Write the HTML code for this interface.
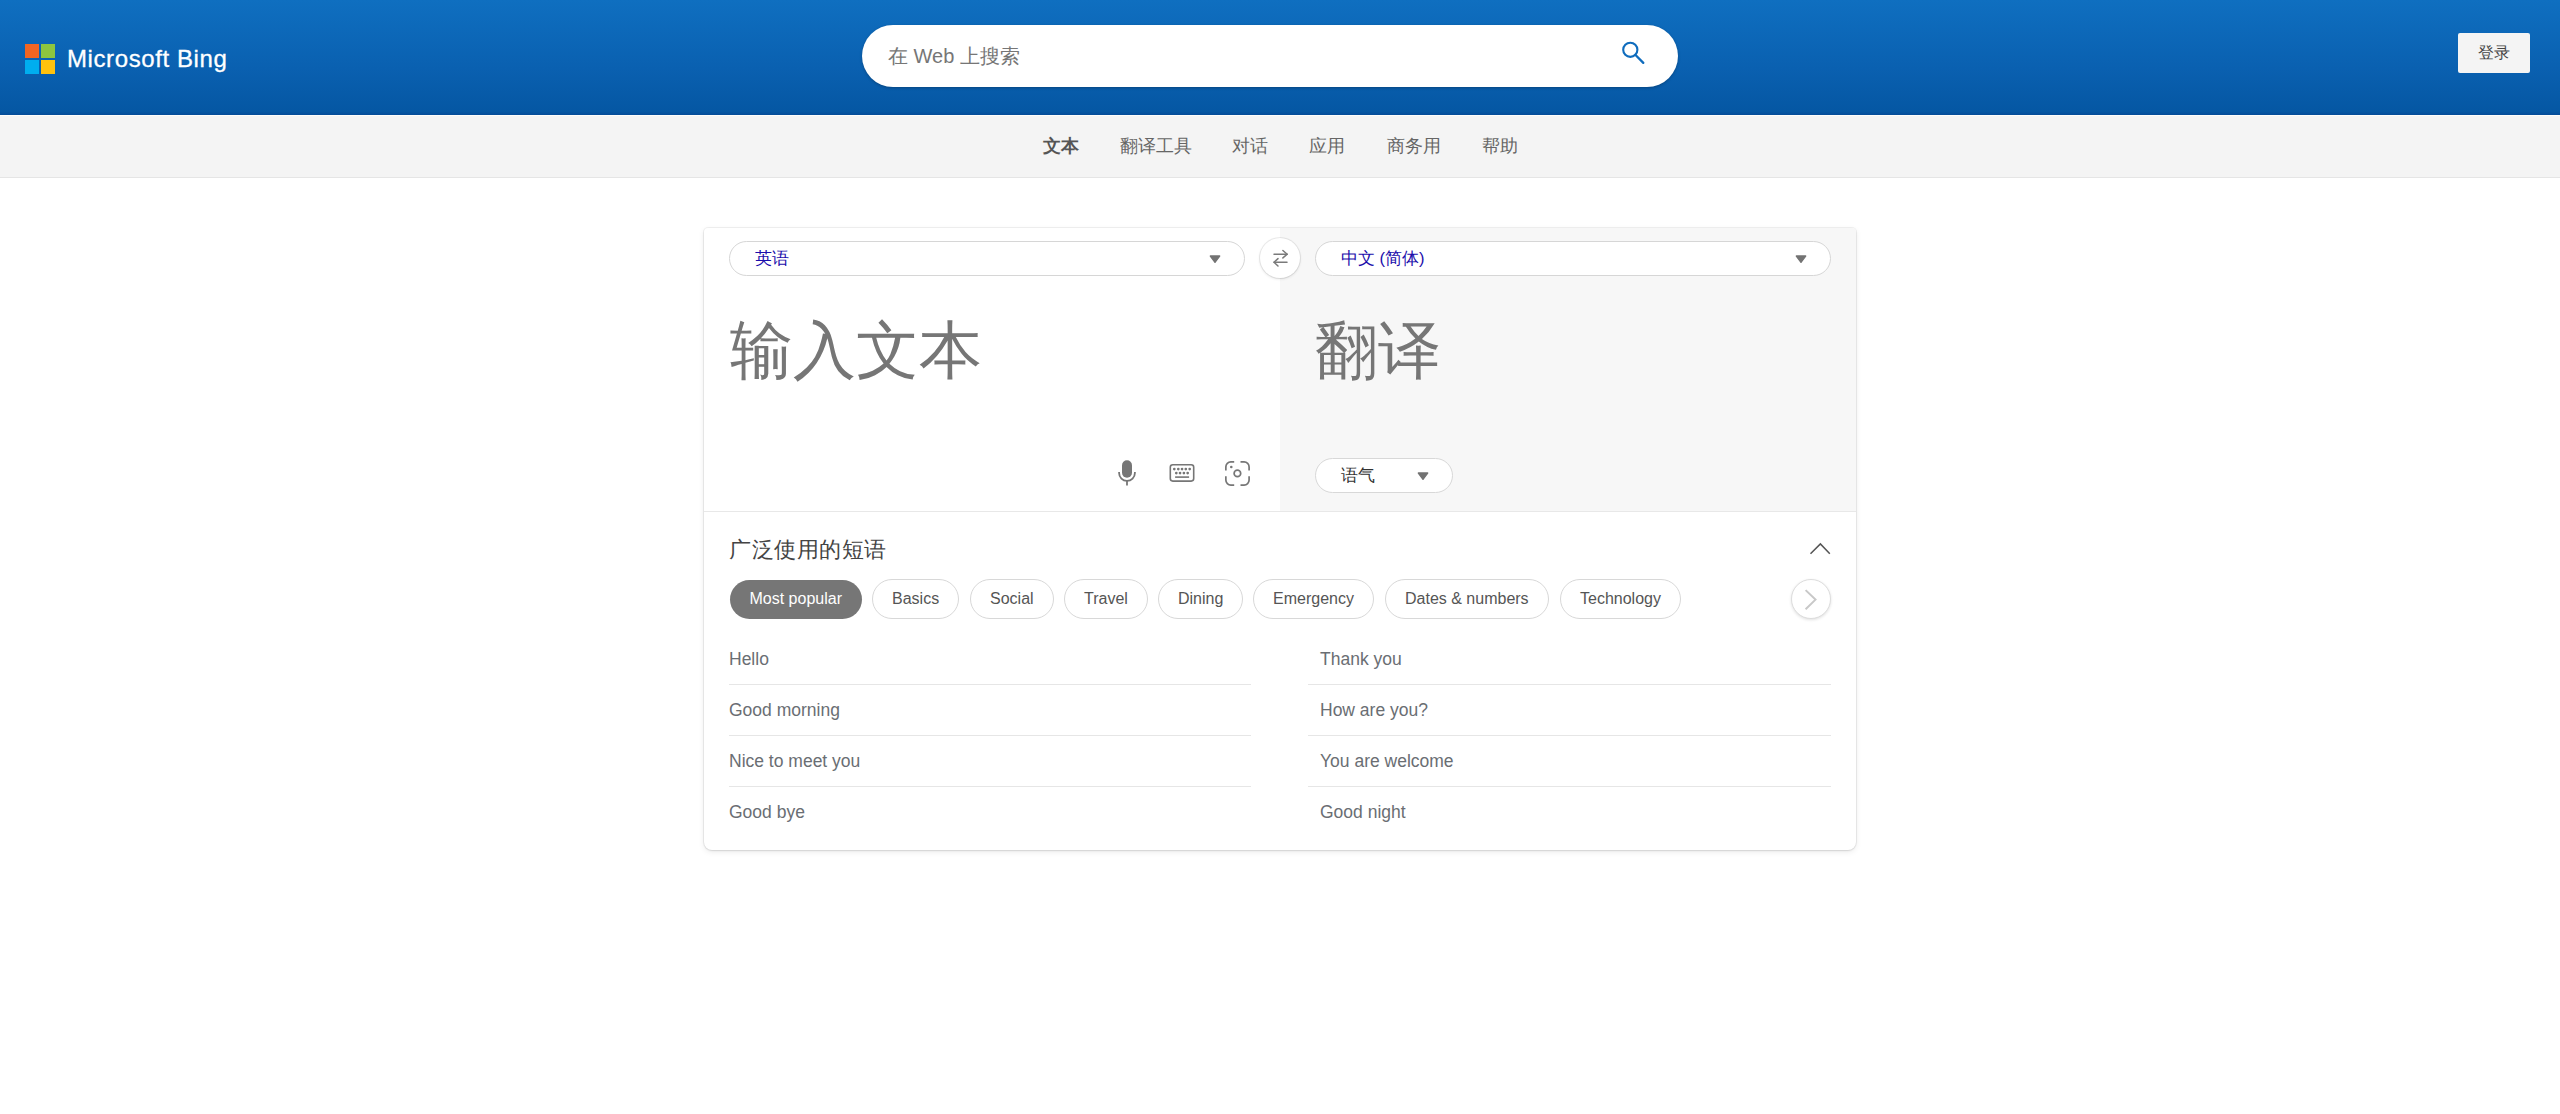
<!DOCTYPE html>
<html><head><meta charset="utf-8">
<style>
*{box-sizing:border-box;margin:0;padding:0}
html,body{width:2560px;height:1114px;overflow:hidden;background:#fff;font-family:"Liberation Sans",sans-serif}
.hdr{position:absolute;left:0;top:0;width:2560px;height:115px;background:linear-gradient(180deg,#0f6fc0 0%,#0a60b0 60%,#0557a3 97%,#054c98 100%)}
.hline{position:absolute;left:0;top:115px;width:2560px;height:1px;background:#fdfdfb}
.logo{position:absolute;left:25px;top:44px;width:30px;height:30px}
.logo i{position:absolute;width:14px;height:14px}
.brand{position:absolute;left:67px;top:44px;color:#fff;font-size:24px;line-height:30px;white-space:nowrap;letter-spacing:0.6px;-webkit-text-stroke:0.3px #fff}
.search{position:absolute;left:862px;top:25px;width:816px;height:62px;border-radius:31px;background:#fff;box-shadow:0 1px 3px rgba(0,0,0,.25)}
.search .ph{position:absolute;left:26px;top:0;line-height:62px;font-size:20px;color:#767676}
.login{position:absolute;left:2458px;top:33px;width:72px;height:40px;background:#f4f4f4;border-radius:2px;color:#444;font-size:16px;line-height:40px;text-align:center}
.nav{position:absolute;left:0;top:116px;width:2560px;height:62px;background:#f4f4f4;border-bottom:1px solid #e5e5e5}
.nav span{position:absolute;top:0;line-height:60px;font-size:18px;color:#666;white-space:nowrap}
.card{position:absolute;left:704px;top:228px;width:1152px;height:622px;background:#fff;border-radius:4px 4px 8px 8px;box-shadow:0 0 0 1px rgba(0,0,0,.05),0 1px 2px rgba(0,0,0,.08),0 2px 6px rgba(0,0,0,.08)}
.rpanel{position:absolute;left:576px;top:0;width:576px;height:283px;background:#f7f7f7;border-top-right-radius:4px}
.divider{position:absolute;left:0;top:283px;width:1152px;height:1px;background:#e8e8e8}
.sel{position:absolute;height:35px;border:1px solid #d6d6d6;border-radius:18px;background:#fff}
.sel .t{position:absolute;left:25px;top:0;line-height:33px;font-size:16.5px;color:#1a0dab}
.tri{position:absolute;width:12px;height:9px}.tri svg{display:block}
.big{position:absolute;font-size:63px;line-height:80px;color:#767676;white-space:nowrap}
.swap{position:absolute;left:556px;top:10px;width:40px;height:40px;border-radius:50%;background:#fff;box-shadow:0 0 0 1px rgba(0,0,0,.07),0 1px 3px rgba(0,0,0,.12)}

.icon{position:absolute}
.tone{position:absolute;left:611px;top:230px;width:138px;height:35px;border:1px solid #d8d8d8;border-radius:18px;background:#fff}
.tone .t{position:absolute;left:25px;top:0;line-height:33px;font-size:16.5px;color:#333}
.ptitle{position:absolute;left:25px;top:307px;letter-spacing:0.5px;font-size:22px;line-height:30px;color:#444;white-space:nowrap}
.pill{position:absolute;top:351px;height:40px;border:1px solid #d8d8d8;border-radius:20px;background:#fff;font-size:16px;line-height:38px;color:#555;padding:0 19px;white-space:nowrap}
.pill.on{background:#767676;border:none;height:39px;top:351.5px;line-height:37.5px;padding:0 19.5px;color:#fff}
.nextb{position:absolute;left:1087px;top:351px;width:40px;height:40px;border-radius:50%;border:1px solid #ddd;background:#fff;box-shadow:0 1px 3px rgba(0,0,0,.12)}
.ph{position:absolute;font-size:17.5px;line-height:22px;color:#6a6e73;white-space:nowrap}
.hl{position:absolute;height:1px;background:#e6e6e6}
</style></head><body>
<div class="hdr"></div><div class="hline"></div>
<div class="logo"><i style="left:0;top:0;background:#f26522"></i><i style="left:16px;top:0;background:#8dc63f"></i><i style="left:0;top:16px;background:#00aeef"></i><i style="left:16px;top:16px;background:#ffc20e"></i></div>
<div class="brand">Microsoft Bing</div>
<div class="search"><div class="ph">在 Web 上搜索</div>
<svg style="position:absolute;left:758px;top:15px" width="30" height="30" viewBox="0 0 30 30"><circle cx="10.3" cy="9.8" r="7.1" fill="none" stroke="#0f6cbd" stroke-width="2.1"/><line x1="15.3" y1="14.8" x2="23.3" y2="22.9" stroke="#0f6cbd" stroke-width="2.3" stroke-linecap="round"/></svg>
</div>
<div class="login">登录</div>
<div class="nav">
<span style="left:1043px;font-weight:bold;color:#555">文本</span>
<span style="left:1120px">翻译工具</span>
<span style="left:1232px">对话</span>
<span style="left:1309px">应用</span>
<span style="left:1387px">商务用</span>
<span style="left:1482px">帮助</span>
</div>
<div class="card">
<div class="rpanel"></div>
<div class="divider"></div>
<div class="sel" style="left:25px;top:13px;width:516px"><div class="t">英语</div><div class="tri" style="left:479px;top:13px"><svg width="12" height="9" viewBox="0 0 12 9"><path d="M1.3 1 H10.7 L6 7.4 Z" fill="#737373" stroke="#737373" stroke-width="1.3" stroke-linejoin="round"/></svg></div></div>
<div class="swap"><svg style="position:absolute;left:0;top:0" width="40" height="40" viewBox="0 0 40 40"><g fill="none" stroke="#7a7a7a" stroke-width="1.5" stroke-linecap="round" stroke-linejoin="round"><path d="M14 16.2 H27.2"/><path d="M22.9 12.5 L27.2 16.2 L22.9 19.9"/><path d="M27 24.3 H14"/><path d="M18 20.6 L14 24.3 L18 28"/></g></svg></div>
<div class="sel" style="left:611px;top:13px;width:516px"><div class="t">中文 (简体)</div><div class="tri" style="left:479px;top:13px"><svg width="12" height="9" viewBox="0 0 12 9"><path d="M1.3 1 H10.7 L6 7.4 Z" fill="#737373" stroke="#737373" stroke-width="1.3" stroke-linejoin="round"/></svg></div></div>
<div class="big" style="left:26px;top:82px">输入文本</div>
<div class="big" style="left:611px;top:82px">翻译</div>

<svg class="icon" style="left:414px;top:230px" width="20" height="28" viewBox="0 0 20 28"><rect x="4" y="2.3" width="10" height="17.4" rx="5" fill="#767676"/><path d="M1.1 14 V15 A7.9 7.9 0 0 0 16.9 15 V14" fill="none" stroke="#767676" stroke-width="1.8"/><line x1="9" y1="23" x2="9" y2="27.5" stroke="#767676" stroke-width="1.8"/></svg>
<svg class="icon" style="left:465px;top:236px" width="26" height="18" viewBox="0 0 26 18"><rect x="1.3" y="0.8" width="23.4" height="16.3" rx="2.5" fill="none" stroke="#767676" stroke-width="1.6"/><g fill="#767676"><circle cx="5.3" cy="5.1" r="1.35"/><circle cx="9.3" cy="5.1" r="1.35"/><circle cx="13.05" cy="5.1" r="1.35"/><circle cx="16.8" cy="5.1" r="1.35"/><circle cx="20.7" cy="5.1" r="1.35"/><circle cx="7.3" cy="9.1" r="1.35"/><circle cx="11.05" cy="9.1" r="1.35"/><circle cx="14.9" cy="9.1" r="1.35"/><circle cx="18.65" cy="9.1" r="1.35"/></g><rect x="6.1" y="12.3" width="14" height="1.6" fill="#767676"/></svg>
<svg class="icon" style="left:520px;top:232px" width="28" height="28" viewBox="0 0 28 28"><g fill="none" stroke="#767676" stroke-width="1.7"><path d="M1.85 10.6 V6.9 A5 5 0 0 1 6.9 1.85 H10.2"/><path d="M16.5 1.85 H20.1 A5 5 0 0 1 25.1 6.9 V10.6"/><path d="M25.1 16.2 V20.1 A5 5 0 0 1 20.1 25.1 H16.5"/><path d="M10.2 25.1 H6.9 A5 5 0 0 1 1.85 20.1 V16.2"/><circle cx="13.4" cy="13.4" r="3.3"/></g><circle cx="7.3" cy="7" r="1.3" fill="#767676"/></svg>
<div class="tone"><div class="t">语气</div><div class="tri" style="left:101px;top:13px"><svg width="12" height="9" viewBox="0 0 12 9"><path d="M1.3 1 H10.7 L6 7.4 Z" fill="#737373" stroke="#737373" stroke-width="1.3" stroke-linejoin="round"/></svg></div></div>
<div class="ptitle">广泛使用的短语</div>
<svg class="icon" style="left:1104px;top:313px" width="24" height="14" viewBox="0 0 24 14"><path d="M2.5 12.8 L12.4 2.9 L21.8 12.8" fill="none" stroke="#555" stroke-width="1.5"/></svg>
<div class="pill on" style="left:26px">Most popular</div>
<div class="pill" style="left:168px">Basics</div>
<div class="pill" style="left:266px">Social</div>
<div class="pill" style="left:360px">Travel</div>
<div class="pill" style="left:454px">Dining</div>
<div class="pill" style="left:549px">Emergency</div>
<div class="pill" style="left:681px">Dates &amp; numbers</div>
<div class="pill" style="left:856px">Technology</div>
<div class="nextb"><svg style="position:absolute;left:0;top:0" width="40" height="40" viewBox="0 0 40 40"><path d="M13.6 10.1 L23.5 19.6 L13.6 29.2" fill="none" stroke="#c8c8c8" stroke-width="2"/></svg></div>
<div class="ph" style="left:25px;top:420px">Hello</div>
<div class="ph" style="left:25px;top:471px">Good morning</div>
<div class="ph" style="left:25px;top:522px">Nice to meet you</div>
<div class="ph" style="left:25px;top:573px">Good bye</div>
<div class="ph" style="left:616px;top:420px">Thank you</div>
<div class="ph" style="left:616px;top:471px">How are you?</div>
<div class="ph" style="left:616px;top:522px">You are welcome</div>
<div class="ph" style="left:616px;top:573px">Good night</div>
<div class="hl" style="left:25px;top:456px;width:522px"></div>
<div class="hl" style="left:25px;top:507px;width:522px"></div>
<div class="hl" style="left:25px;top:558px;width:522px"></div>
<div class="hl" style="left:604px;top:456px;width:523px"></div>
<div class="hl" style="left:604px;top:507px;width:523px"></div>
<div class="hl" style="left:604px;top:558px;width:523px"></div>
</div>
</body></html>
